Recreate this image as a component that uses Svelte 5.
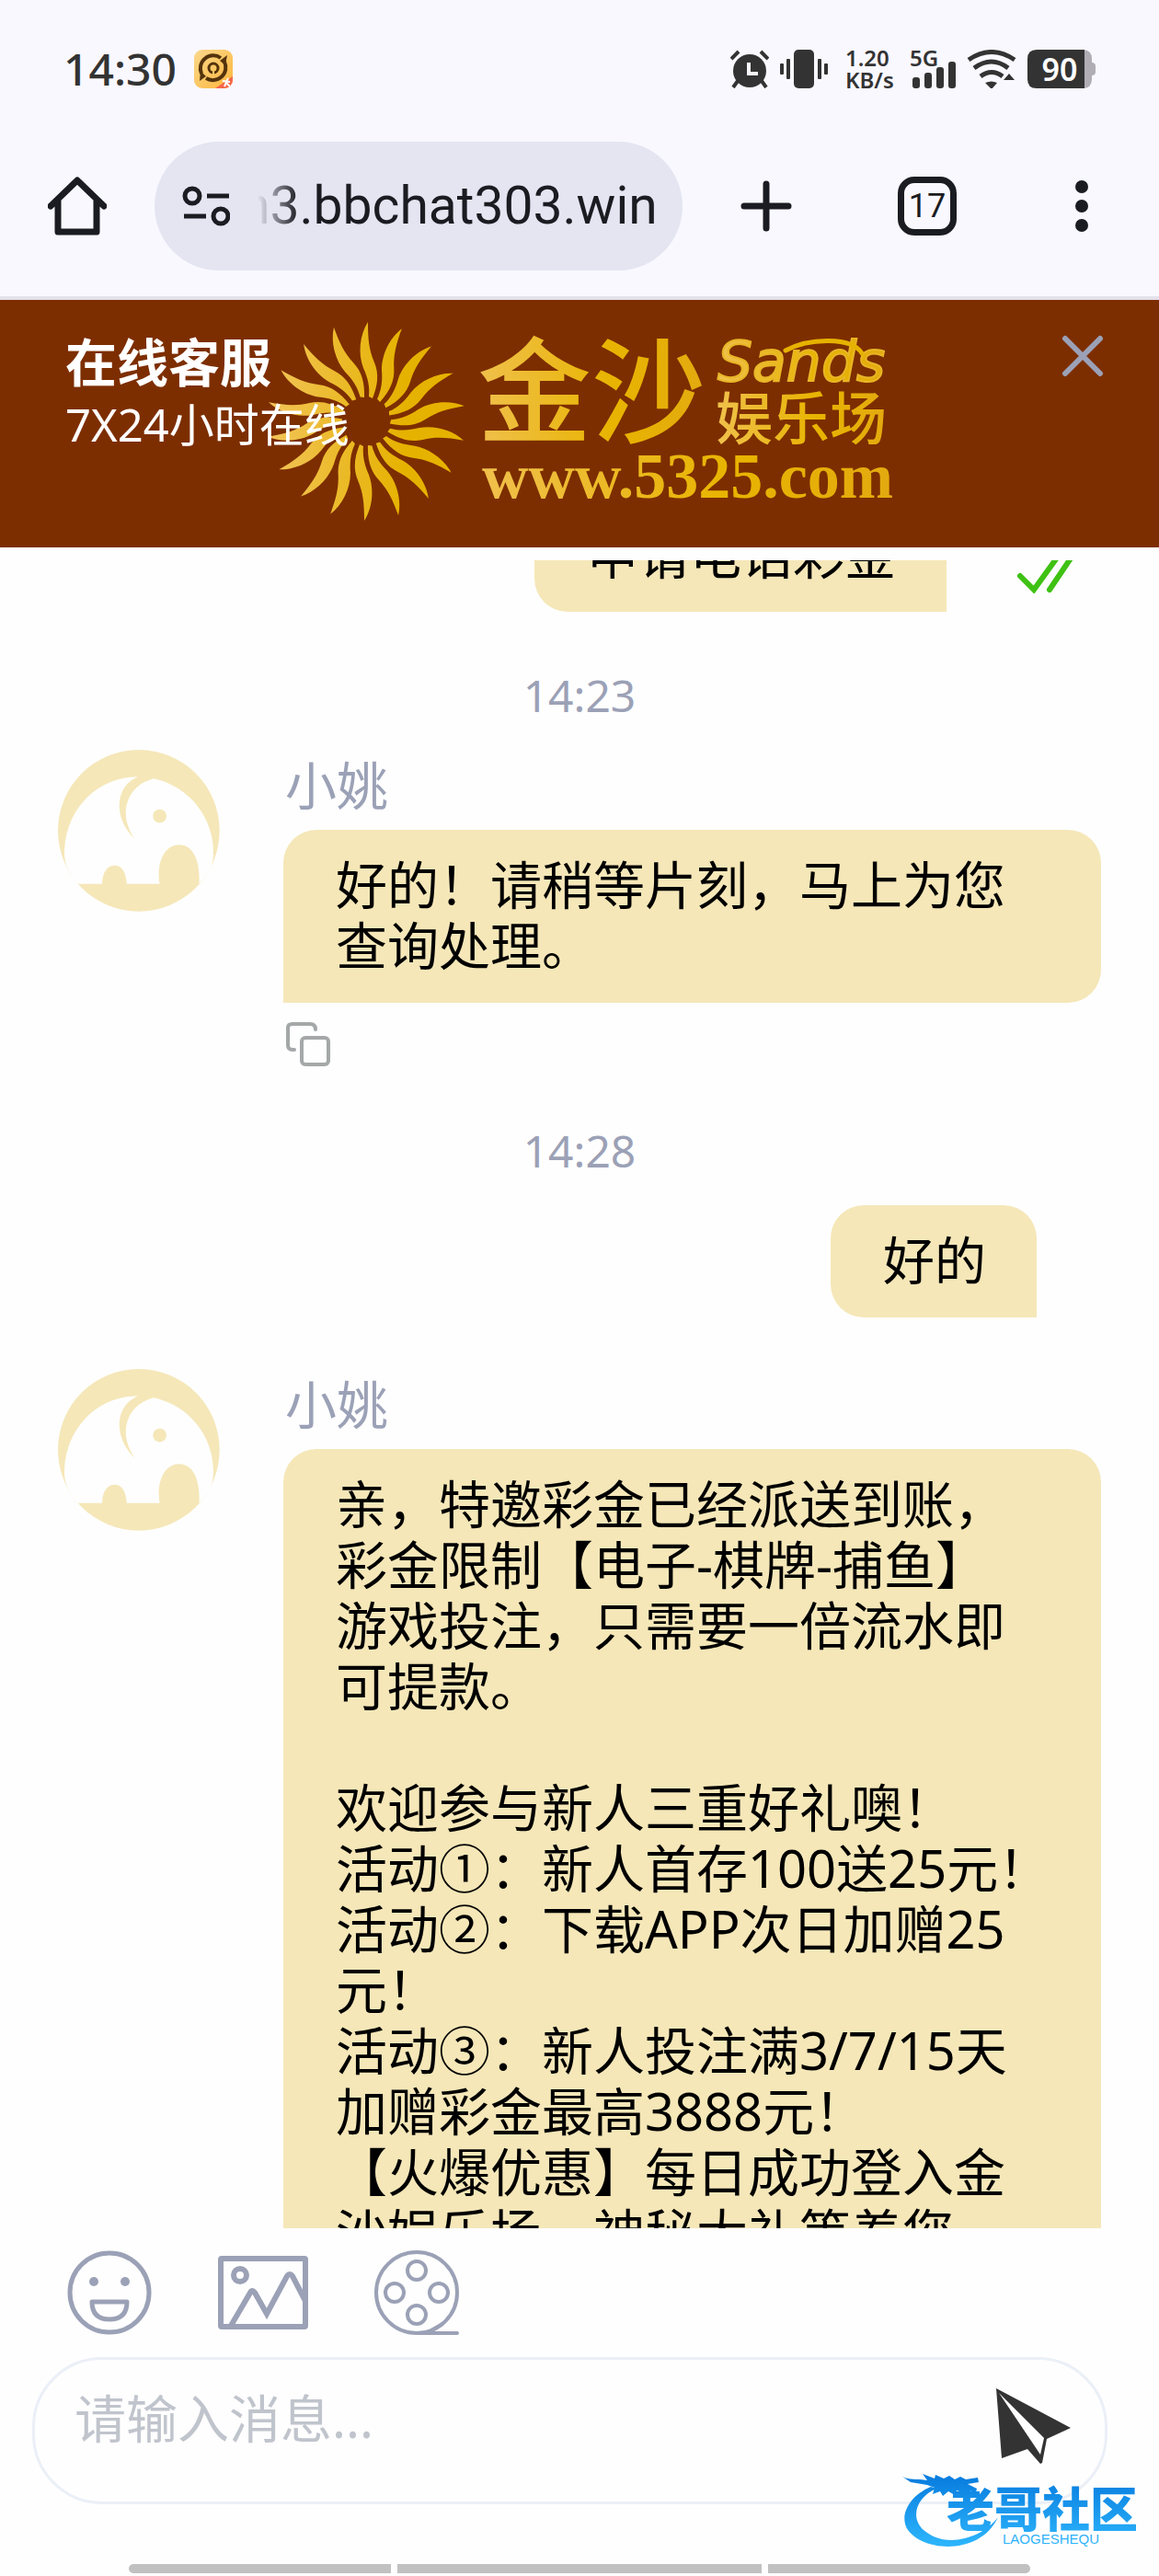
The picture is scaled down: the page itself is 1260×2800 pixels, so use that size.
<script>
	import { onMount } from 'svelte';

	const messages = [
		{ type: 'mine', text: '申请电话彩金', read: true },
		{ type: 'time', text: '14:23' },
		{ type: 'agent', name: '小姚', text: '好的！请稍等片刻，马上为您查询处理。' },
		{ type: 'time', text: '14:28' },
		{ type: 'mine', text: '好的', read: false },
		{
			type: 'agent',
			name: '小姚',
			text: `亲，特邀彩金已经派送到账，彩金限制【电子-棋牌-捕鱼】
游戏投注，只需要一倍流水即可提款。

欢迎参与新人三重好礼噢！
活动①：新人首存100送25元！
活动②：下载APP次日加赠25元！
活动③：新人投注满3/7/15天加赠彩金最高3888元！
【火爆优惠】每日成功登入金沙娱乐场，神秘大礼等着您`
		}
	];

	// 18 rays around the logo sun
	const rays = Array.from({ length: 18 }, (_, i) => i * 20);

	let url = $state('n3.bbchat303.win');
	let draft = $state('');
	let list;

	onMount(() => {
		// first message is already half scrolled away
		list.scrollTop = 66;
	});
</script>

<div class="screen">
	<div class="status-bar">
		<span class="clock">14:30</span>
		<svg class="app-badge" viewBox="0 0 42 42" width="42" height="42" aria-hidden="true">
			<defs>
				<clipPath id="badge-clip"><rect width="42" height="42" rx="9" /></clipPath>
				<linearGradient id="badge-fill" x1="0" y1="0" x2="1" y2="1">
					<stop offset="0" stop-color="#fbd88c" />
					<stop offset="1" stop-color="#fdb63c" />
				</linearGradient>
			</defs>
			<g clip-path="url(#badge-clip)">
				<rect width="42" height="42" fill="url(#badge-fill)" />
				<path d="M29 9A14 14 0 0 0 8 26" fill="none" stroke="#54330c" stroke-width="4" />
				<path d="M33 13A14 14 0 0 1 13 31" fill="none" stroke="#54330c" stroke-width="4" />
				<path d="M36 6l-8 6 6 5zM6 34l1-11 6 6z" fill="#54330c" />
				<circle cx="21" cy="20" r="5" fill="none" stroke="#54330c" stroke-width="3" />
				<path d="M21 20v7" stroke="#fbc760" stroke-width="2" />
				<path d="M42 29v13H23z" fill="#f5664b" />
				<path d="M31 34l8 1M37 31l-4 9M35 36l4 4" stroke="#fff" stroke-width="2" />
			</g>
		</svg>

		<div class="indicators">
			<svg viewBox="0 0 42 42" width="42" height="42" aria-label="闹钟">
				<circle cx="21" cy="23" r="18" fill="#333" />
				<path d="M8 34l-5 7M34 34l5 7" stroke="#333" stroke-width="4" />
				<path d="M1 10l8-8M41 10l-8-8" stroke="#333" stroke-width="4" />
				<path d="M20 14v12h10" fill="none" stroke="#f9f8ff" stroke-width="4" />
			</svg>
			<svg class="vibrate" viewBox="0 0 52 42" width="52" height="42" aria-label="振动">
				<g fill="#333">
					<rect x="15" width="22" height="42" rx="5" />
					<rect x="7" y="10" width="4" height="22" rx="1" />
					<rect x="41" y="10" width="4" height="22" rx="1" />
					<rect y="15" width="4" height="12" rx="1" />
					<rect x="48" y="15" width="4" height="12" rx="1" />
				</g>
			</svg>
			<div class="speed"><span>1.20</span><span>KB/s</span></div>
			<div class="signal">
				<span>5G</span>
				<svg viewBox="0 0 50 42" width="50" height="42" aria-hidden="true">
					<g fill="#333">
						<rect x="3" y="30" width="8" height="12" rx="3" />
						<rect x="16" y="25" width="8" height="17" rx="3" />
						<rect x="29" y="19" width="8" height="23" rx="3" />
						<rect x="42" y="13" width="8" height="29" rx="3" />
					</g>
				</svg>
			</div>
			<svg viewBox="0 0 54 42" width="54" height="42" aria-label="无线网络">
				<g fill="none" stroke="#333" stroke-width="5">
					<path d="M2 11Q27-6 52 11" />
					<path d="M8 20Q27 6 45 20" />
					<path d="M15 29Q27 20 39 29" />
				</g>
				<path d="M20 36q7-3 13 0l-6 7z" fill="#333" />
				<path d="M46 26l6 7H40z" fill="#333" />
			</svg>
			<div class="battery">
				<svg viewBox="0 0 74 42" width="74" height="42" aria-hidden="true">
					<path d="M10 0H60q10 0 10 10v4q4 0 4 4v6q0 4-4 4v4q0 10-10 10H10z" fill="#b0adb5" />
					<path d="M10 0H62V42H10Q0 42 0 32V10Q0 0 10 0z" fill="#333" />
				</svg>
				<span>90</span>
			</div>
		</div>
	</div>

	<div class="toolbar">
		<button aria-label="主页">
			<svg viewBox="0 0 64 64" width="64" height="64">
				<path
					d="M3 32L32 4l29 28M11 26v34h42V26"
					fill="none"
					stroke="#1b1c22"
					stroke-width="7"
					stroke-linejoin="round"
					stroke-linecap="round"
				/>
			</svg>
		</button>
		<div class="address">
			<svg viewBox="0 0 52 44" width="52" height="44" aria-hidden="true">
				<g fill="none" stroke="#1b1c22" stroke-width="5">
					<circle cx="11" cy="11" r="8" />
					<circle cx="42" cy="33" r="8" />
					<path d="M27 11h24M2 33h24" />
				</g>
			</svg>
			<input type="text" aria-label="网址" bind:value={url} />
		</div>
		<button class="new-tab" aria-label="新标签页">
			<svg viewBox="0 0 56 56" width="56" height="56">
				<path d="M28 4v48M4 28h48" stroke="#1b1c22" stroke-width="7" stroke-linecap="round" />
			</svg>
		</button>
		<button class="tabs" aria-label="标签页">17</button>
		<button class="more" aria-label="更多">
			<svg viewBox="0 0 14 56" width="14" height="56">
				<g fill="#1b1c22">
					<circle cx="7" cy="7" r="7" />
					<circle cx="7" cy="28" r="7" />
					<circle cx="7" cy="49" r="7" />
				</g>
			</svg>
		</button>
	</div>

	<header class="banner">
		<svg class="logo" viewBox="288 346 696 220" width="696" height="220" aria-label="金沙娱乐场">
			<defs>
				<linearGradient
					id="gold"
					gradientUnits="userSpaceOnUse"
					x1="290"
					y1="0"
					x2="440"
					y2="0"
				>
					<stop offset="0" stop-color="#f2c45a" />
					<stop offset="1" stop-color="#e6b200" />
				</linearGradient>
				<linearGradient id="gold-text" x1="0" y1="0" x2="1" y2="0">
					<stop offset="0" stop-color="#f0c04c" />
					<stop offset="0.6" stop-color="#e8b400" />
					<stop offset="1" stop-color="#e3aa10" />
				</linearGradient>
				<mask id="ray-mask" maskUnits="userSpaceOnUse" x="288" y="346" width="230" height="220">
					<g fill="#fff">
						{#each rays as angle (angle)}
							<path
								transform="translate(398 458) rotate({angle})"
								d="M2-108C-7-94-9-74-3-58C2-47 4-38 3-27L7-25C13-40 14-52 9-64C3-78 2-90 2-108z"
							/>
						{/each}
					</g>
				</mask>
			</defs>
			<rect x="288" y="346" width="230" height="220" fill="url(#gold)" mask="url(#ray-mask)" />
			<g fill="url(#gold-text)">
				<text class="logo-name" x="519" y="471">金沙</text>
				<text class="logo-sands" x="780" y="414">Sands</text>
				<text class="logo-sub" x="778" y="478">娱乐场</text>
				<text class="logo-url" x="524" y="541">www.5325.com</text>
			</g>
			<path
				d="M854 381C880 367 926 366 937 384"
				fill="none"
				stroke="#e6b200"
				stroke-width="5"
				stroke-linecap="round"
			/>
		</svg>
		<div class="banner-text">
			<h1>在线客服</h1>
			<p>7X24小时在线</p>
		</div>
		<button class="close" aria-label="关闭">
			<svg viewBox="0 0 46 46" width="46" height="46">
				<path d="M4 4l38 38M42 4L4 42" stroke="#9ba1b6" stroke-width="6" stroke-linecap="round" />
			</svg>
		</button>
	</header>

	<main class="messages" bind:this={list}>
		{#each messages as msg, i (i)}
			{#if msg.type === 'time'}
				<time>{msg.text}</time>
			{:else if msg.type === 'mine'}
				<div class="row mine" class:read={msg.read}>
					<p class="bubble">{msg.text}</p>
					{#if msg.read}
						<svg class="ticks" viewBox="0 0 66 50" width="66" height="50" aria-label="已读">
							<g fill="none" stroke="#3fc114" stroke-width="6" stroke-linecap="round">
								<path d="M3 31l15 15L49 3" />
								<path d="M35 46L66 0" />
							</g>
						</svg>
					{/if}
				</div>
			{:else}
				<div class="row agent">
					<svg class="avatar" viewBox="69 75 525 525" width="176" height="176" aria-hidden="true">
						<circle cx="331" cy="337" r="262" fill="#f5e7b8" />
						<path
							d="M133 510C100 470 88 440 90 400C97 255 210 160 328 163C250 195 250 300 318 363C262 285 290 190 380 168C500 195 575 300 573 410C573 450 560 475 527 510C531 440 510 383 462 383C415 383 387 440 399 510H292C290 470 275 450 253 450S213 470 212 510z"
							fill="#fefefe"
						/>
						<circle cx="399" cy="290" r="22" fill="#f5e7b8" />
					</svg>
					<div class="body">
						<span class="name">{msg.name}</span>
						<p class="bubble">{msg.text}</p>
						<button class="copy" aria-label="复制">
							<svg viewBox="0 0 50 50" width="50" height="50">
								<g fill="none" stroke="#a5a8a8" stroke-width="4" stroke-linecap="round">
									<path d="M10 31H8q-5 0-5-5V7q0-4 5-4h19q6 0 6 6" />
									<rect x="18" y="18" width="29" height="29" rx="4" />
								</g>
							</svg>
						</button>
					</div>
				</div>
			{/if}
		{/each}
	</main>

	<footer>
		<div class="tools">
			<button aria-label="表情">
				<svg viewBox="0 0 92 92" width="92" height="92">
					<g fill="none" stroke="#9ba1b6" stroke-width="5">
						<circle cx="46" cy="46" r="43" />
						<path d="M27 56h38q0 19-19 19T27 56z" stroke-linejoin="round" />
					</g>
					<circle cx="29" cy="34" r="5" fill="#9ba1b6" />
					<circle cx="63" cy="34" r="5" fill="#9ba1b6" />
				</svg>
			</button>
			<button aria-label="图片">
				<svg viewBox="0 0 98 80" width="98" height="80">
					<g fill="none" stroke="#9ba1b6" stroke-width="6" stroke-linejoin="round">
						<rect x="3" y="3" width="92" height="74" rx="1" />
						<circle cx="24" cy="21" r="7" />
						<path d="M14 76L35 40q2-4 5 0l13 23 22-41q3-4 6 0l15 29" stroke-linejoin="miter" />
					</g>
				</svg>
			</button>
			<button aria-label="视频">
				<svg viewBox="0 0 92 92" width="92" height="92">
					<g fill="none" stroke="#9ba1b6" stroke-width="4">
						<circle cx="46" cy="46" r="44" />
						<circle cx="46" cy="22" r="10" />
						<circle cx="22" cy="46" r="10" />
						<circle cx="70" cy="46" r="10" />
						<circle cx="46" cy="70" r="10" />
						<path d="M46 90h44M62 87L74 80" stroke-linecap="round" />
					</g>
				</svg>
			</button>
		</div>
		<div class="composer">
			<textarea rows="1" aria-label="消息" placeholder="请输入消息..." bind:value={draft}></textarea>
			<button aria-label="发送">
				<svg viewBox="0 0 84 84" width="84" height="84">
					<path d="M2 1L83 44 57 56 52 82 50 83 36 67 8 77z" fill="#333" />
					<path d="M5 6L54 55 50 73z" fill="#fefefe" />
				</svg>
			</button>
		</div>
		<div class="gesture-bar"><i></i><i></i><i></i></div>
	</footer>

	<svg class="watermark" viewBox="0 0 264 92" width="264" height="92" aria-label="老哥社区">
		<defs>
			<linearGradient id="wm" gradientUnits="userSpaceOnUse" x1="0" y1="15" x2="0" y2="85">
				<stop offset="0" stop-color="#0a7fe0" />
				<stop offset="1" stop-color="#2cb4fb" />
			</linearGradient>
		</defs>
		<g fill="url(#wm)">
			<path
				d="M32 23C8 33-3 55 7 70C24 94 86 98 105 56C88 79 48 91 24 70C8 55 18 33 38 25z"
			/>
			<path
				d="M1 12C8 16 17 14 28 16L23 9 36 14 37 10 46 14 52 11 58 15 64 12 70 15 83 13 84 18 72 20 82 25 81 29 68 26 70 30 60 27 58 32 51 28 45 33 42 28 34 31 36 24 28 21 10 18z"
			/>
			<text class="wm-name" x="49" y="67">老哥社区</text>
			<text class="wm-latin" x="110" y="85">LAOGESHEQU</text>
		</g>
	</svg>
</div>

<style>
	:global(body) {
		margin: 0;
		background: #fefefe;
	}

	.screen {
		position: relative;
		display: flex;
		flex-direction: column;
		height: 100vh;
		overflow: hidden;
		background: #fefefe;
		color: #000;
		font-family: 'Noto Sans', 'Noto Sans CJK SC', sans-serif;
	}

	button {
		display: flex;
		align-items: center;
		justify-content: center;
		flex: none;
		padding: 0;
		border: none;
		background: none;
		cursor: pointer;
	}

	svg {
		display: block;
		flex: none;
	}

	h1,
	p {
		margin: 0;
	}

	/* status bar */
	.status-bar {
		display: flex;
		align-items: center;
		height: 42px;
		padding: 54px 69px 58px 69px;
		background: #f9f8ff;
		color: #333;
	}

	.clock {
		font-size: 48px;
		font-weight: 500;
		line-height: 42px;
	}

	.app-badge {
		margin-left: 19px;
	}

	.indicators {
		display: flex;
		align-items: center;
		gap: 12px;
		margin-left: auto;
	}

	.vibrate {
		margin-right: 7px;
	}

	.speed {
		display: flex;
		flex-direction: column;
		width: 58px;
		font-size: 24px;
		font-weight: 600;
		line-height: 24px;
	}

	.signal,
	.battery {
		position: relative;
	}

	.signal span {
		position: absolute;
		top: -3px;
		left: 0;
		font-size: 24px;
		font-weight: 600;
		line-height: 24px;
	}

	.battery span {
		position: absolute;
		inset: 0 12px 0 8px;
		color: #fff;
		font-size: 34px;
		font-weight: 600;
		line-height: 42px;
		text-align: center;
	}

	/* browser toolbar */
	.toolbar {
		display: flex;
		align-items: center;
		padding: 0 77px 28px 52px;
		border-bottom: 4px solid #e3e1ea;
		background: #f9f8ff;
	}

	.address {
		display: flex;
		flex: 1;
		align-items: center;
		min-width: 0;
		height: 140px;
		margin: 0 63px 0 52px;
		padding: 0 20px 0 30px;
		border-radius: 70px;
		background: #e4e5f1;
		box-sizing: border-box;
	}

	.address input {
		flex: 1;
		min-width: 0;
		margin-left: 12px;
		padding: 0;
		border: none;
		outline: none;
		background: none;
		color: #1b1c22;
		font-family: Roboto, sans-serif;
		font-size: 57px;
		line-height: 68px;
		mask-image: linear-gradient(to right, transparent 18px, #000 62px);
	}

	.tabs {
		width: 64px;
		height: 64px;
		margin: 0 129px 0 115px;
		border: 7px solid #1b1c22;
		border-radius: 18px;
		box-sizing: border-box;
		color: #1b1c22;
		font-family: Roboto, sans-serif;
		font-size: 36px;
	}

	/* chat header */
	.banner {
		position: relative;
		display: flex;
		justify-content: space-between;
		align-items: flex-start;
		min-height: 269px;
		padding: 33px 60px 33px 71px;
		background: #7d2e00;
		color: #fff;
		box-sizing: border-box;
	}

	.logo {
		position: absolute;
		top: 20px;
		left: 288px;
	}

	.logo-name,
	.logo-sub {
		font-family: 'Noto Sans CJK SC', sans-serif;
	}

	.logo-name {
		font-size: 124px;
		font-weight: 500;
	}

	.logo-sub {
		font-size: 62px;
		font-weight: 500;
	}

	.logo-sands {
		font-family: 'DejaVu Sans', sans-serif;
		font-size: 60px;
		font-style: italic;
		stroke: #e8b626;
		stroke-width: 2px;
	}

	.logo-url {
		font-family: 'Liberation Serif', serif;
		font-size: 70px;
		font-weight: 700;
	}

	.banner-text {
		position: relative;
	}

	.banner h1 {
		font-size: 56px;
		font-weight: 700;
		line-height: 68px;
	}

	.banner p {
		font-size: 49px;
		line-height: 68px;
	}

	.close {
		margin-top: 5px;
	}

	/* messages */
	.messages {
		flex: 1;
		min-height: 0;
		margin-top: 14px;
		overflow-y: auto;
		scrollbar-width: none;
	}

	.messages::-webkit-scrollbar {
		display: none;
	}

	time {
		display: block;
		margin: 58px 0 26px;
		color: #9ba1b6;
		font-size: 48px;
		line-height: 66px;
		text-align: center;
	}

	.row {
		display: flex;
	}

	.bubble {
		padding: 26px 55px 30px 57px;
		border-radius: 36px;
		background: #f5e7b8;
		font-size: 56px;
		line-height: 66px;
		white-space: pre-line;
	}

	.mine {
		justify-content: flex-end;
		padding-right: 133px;
	}

	.mine.read {
		padding-right: 88px;
	}

	.mine .bubble {
		border-bottom-right-radius: 0;
	}

	.mine + .agent {
		margin-top: 56px;
	}

	.ticks {
		align-self: flex-end;
		margin: 0 0 20px 77px;
	}

	.agent {
		gap: 69px;
		padding: 0 63px;
	}

	.agent .bubble {
		border-bottom-left-radius: 0;
	}

	.body {
		flex: 1;
		min-width: 0;
	}

	.name {
		display: block;
		margin-bottom: 11px;
		padding-left: 2px;
		color: #9ba1b6;
		font-size: 56px;
		line-height: 76px;
	}

	.copy {
		margin: 20px 0 0 2px;
	}

	/* input area */
	.tools {
		display: flex;
		align-items: center;
		gap: 72px;
		padding: 24px 73px;
	}

	.composer {
		display: flex;
		align-items: flex-start;
		min-height: 160px;
		margin: 0 56px 0 35px;
		padding: 30px 36px 30px 43px;
		border: 3px solid #ebeff7;
		border-radius: 76px;
		box-sizing: border-box;
	}

	.composer textarea {
		flex: 1;
		min-width: 0;
		padding: 0;
		border: none;
		outline: none;
		background: none;
		resize: none;
		overflow: hidden;
		font-family: inherit;
		font-size: 56px;
		line-height: 66px;
	}

	.composer textarea::placeholder {
		color: #c0c4cc;
	}

	.gesture-bar {
		display: grid;
		grid-template-columns: 286fr 396fr 286fr;
		gap: 7px;
		padding: 65px 140px 3px;
	}

	.gesture-bar i {
		height: 10px;
		background: #c1c1c1;
	}

	.gesture-bar i:first-child {
		border-radius: 5px 0 0 5px;
	}

	.gesture-bar i:last-child {
		border-radius: 0 5px 5px 0;
	}

	.watermark {
		position: absolute;
		right: 16px;
		bottom: 28px;
	}

	.wm-name {
		font-size: 52px;
		font-weight: 900;
	}

	.wm-latin {
		font-family: 'Liberation Sans', sans-serif;
		font-size: 15px;
	}
</style>
